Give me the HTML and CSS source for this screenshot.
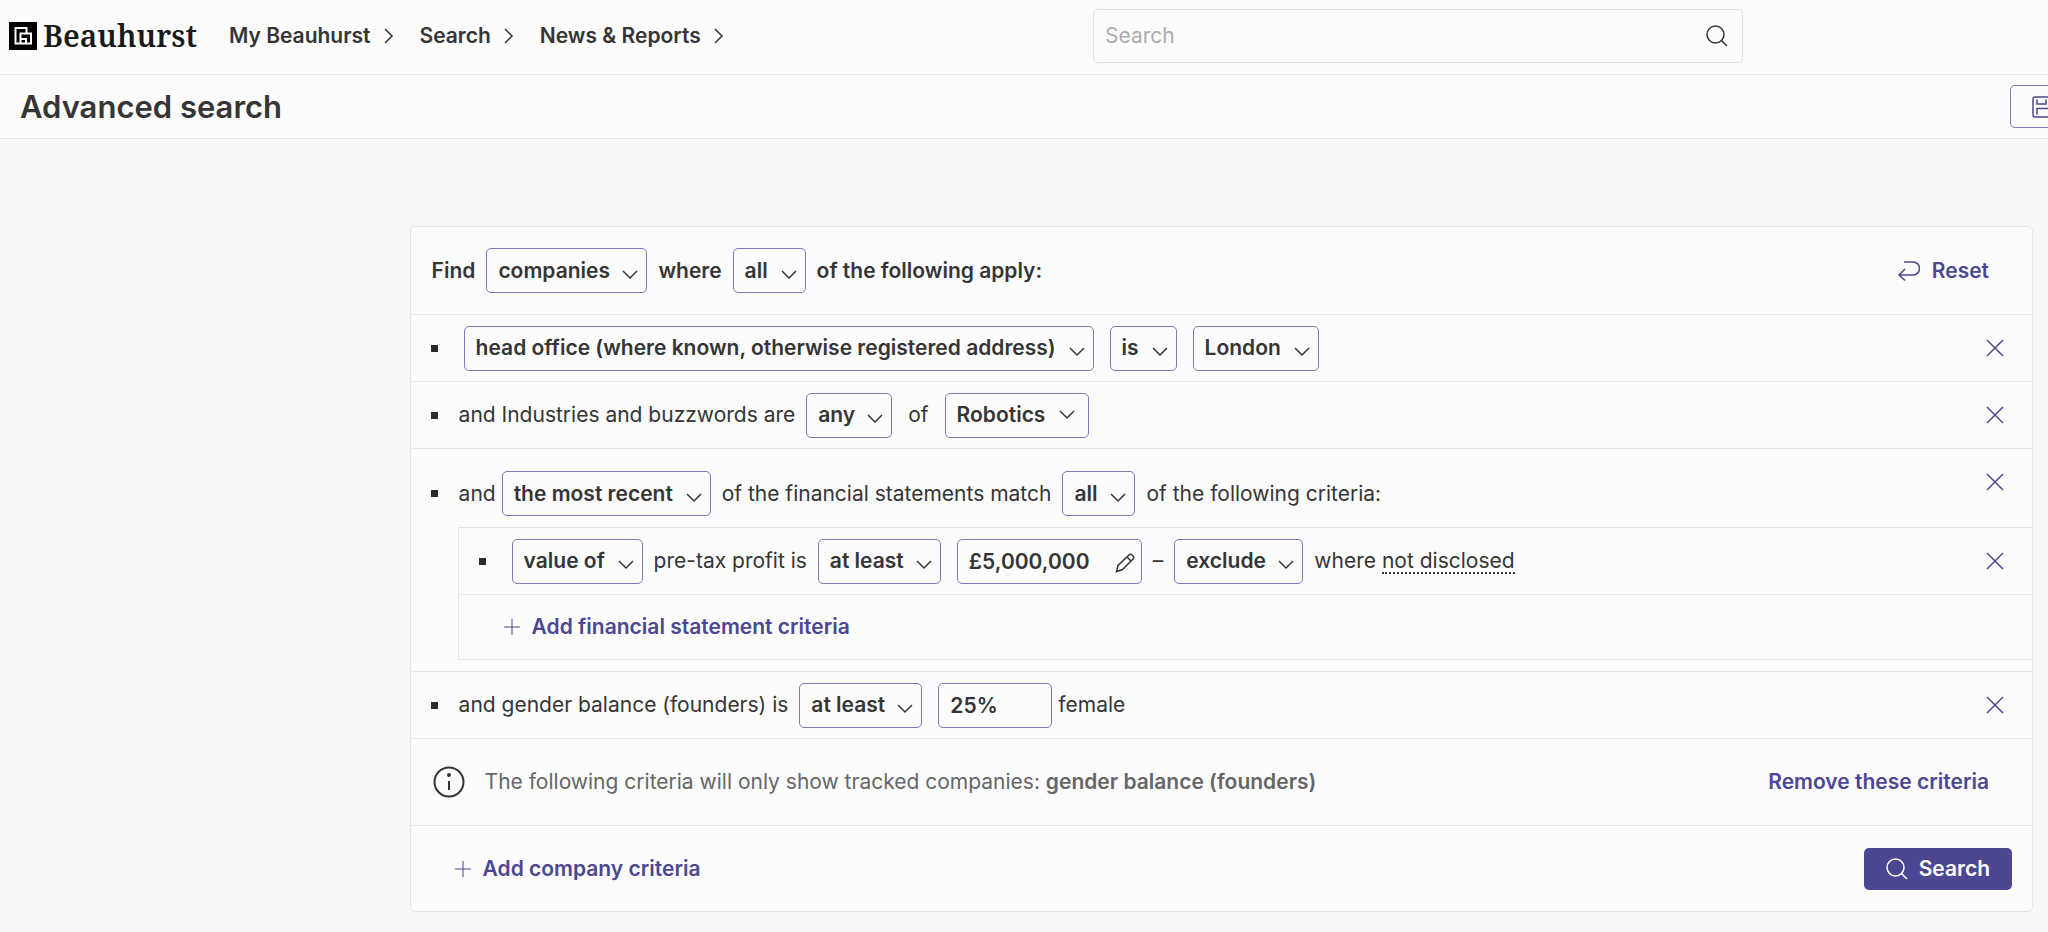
FILE: index.html
```html
<!DOCTYPE html>
<html lang="en">
<head>
<meta charset="utf-8">
<title>Advanced search</title>
<link rel="stylesheet" href="styles.css">
</head>
<body>
<svg class="sprite" aria-hidden="true">
  <symbol id="chevron" viewBox="0 0 16 10"><path d="M1 1l7 7 7-7"/></symbol>
  <symbol id="arrow" viewBox="0 0 10 18"><path d="M1 2l7 7-7 7"/></symbol>
  <symbol id="close" viewBox="0 0 18 18"><path d="M1 1l16 16M17 1L1 17"/></symbol>
  <symbol id="plus" viewBox="0 0 16 16"><path d="M8 0v16M0 8h16"/></symbol>
  <symbol id="glass" viewBox="0 0 22 22"><circle cx="9.5" cy="9.5" r="8.5"/><path d="M15.5 15.5l5.5 5.5"/></symbol>
</svg>

<header class="topbar">
  <a class="logo" href="#">
    <svg class="logo-mark" viewBox="0 0 28 28" aria-hidden="true">
      <rect width="28" height="28"/>
      <path d="M17.500 11.500V6H6.500V21.500H11.500V11.500H22V21.500H11.500M17 21.500V17H11.500"/>
    </svg>
    <span>Beauhurst</span>
  </a>
  <nav class="nav">
    <a href="#">My Beauhurst <svg class="arrow"><use href="#arrow"/></svg></a>
    <a href="#">Search <svg class="arrow"><use href="#arrow"/></svg></a>
    <a href="#">News &amp; Reports <svg class="arrow"><use href="#arrow"/></svg></a>
  </nav>
  <form class="site-search">
    <input type="search" placeholder="Search" aria-label="Search">
    <button type="button" aria-label="Go"><svg class="glass"><use href="#glass"/></svg></button>
  </form>
</header>

<div class="titlebar">
  <h1>Advanced search</h1>
  <button class="save" type="button" aria-label="Save">
    <svg viewBox="0 0 22 22"><path d="M1 3a2 2 0 0 1 2-2h13l5 5v13a2 2 0 0 1-2 2H3a2 2 0 0 1-2-2z"/><path d="M5 3.500v4.500h9V3.500M5 18.500v-6h12v6"/></svg>
  </button>
</div>

<main class="page">
  <form class="card">
    <div class="row row-find">
      <div class="line strong">
        <span>Find</span>
        <span class="picker"><select aria-label="Entity"><option>companies</option></select><svg><use href="#chevron"/></svg></span>
        <span>where</span>
        <span class="picker"><select aria-label="Match"><option>all</option></select><svg><use href="#chevron"/></svg></span>
        <span>of the following apply:</span>
      </div>
      <button class="link reset" type="button"><svg class="undo" viewBox="0 0 22 20"><path d="M6 1h9a6 6 0 0 1 0 13H1M7 8l-6 6 6 5.500"/></svg>Reset</button>
    </div>

    <ul class="criteria">
      <li class="row">
        <div class="line">
          <span class="picker"><select aria-label="Location type"><option>head office (where known, otherwise registered address)</option></select><svg><use href="#chevron"/></svg></span>
          <span class="picker"><select aria-label="Operator"><option>is</option></select><svg><use href="#chevron"/></svg></span>
          <span class="picker"><select aria-label="Location"><option>London</option></select><svg><use href="#chevron"/></svg></span>
        </div>
        <button class="remove" type="button" aria-label="Remove"><svg><use href="#close"/></svg></button>
      </li>
      <li class="row">
        <div class="line">
          <span>and Industries and buzzwords are</span>
          <span class="picker"><select aria-label="Industry match"><option>any</option></select><svg><use href="#chevron"/></svg></span>
          <span class="spaced">of</span>
          <button class="tag" type="button">Robotics <svg><use href="#chevron"/></svg></button>
        </div>
        <button class="remove" type="button" aria-label="Remove"><svg><use href="#close"/></svg></button>
      </li>
      <li class="group">
        <div class="row row-group">
          <div class="line">
            <span>and</span>
            <span class="picker tight"><select aria-label="Statement period"><option>the most recent</option></select><svg><use href="#chevron"/></svg></span>
            <span>of the financial statements match</span>
            <span class="picker"><select aria-label="Statement match"><option>all</option></select><svg><use href="#chevron"/></svg></span>
            <span>of the following criteria:</span>
          </div>
          <button class="remove" type="button" aria-label="Remove"><svg><use href="#close"/></svg></button>
        </div>
        <ul class="nested">
          <li class="row">
            <div class="line">
              <span class="picker"><select aria-label="Measure"><option>value of</option></select><svg><use href="#chevron"/></svg></span>
              <span>pre-tax profit is</span>
              <span class="picker"><select aria-label="Comparison"><option>at least</option></select><svg><use href="#chevron"/></svg></span>
              <span class="picker amount"><input type="text" value="£5,000,000" aria-label="Amount"><svg class="pencil" viewBox="0 0 20 20"><path d="M1.500 18.500l1.500-6L14 2q1.500-1.500 3 0l1 1q1.500 1.500 0 3L7.500 16.500zM12 4l4 4"/></svg></span>
              <span>–</span>
              <span class="picker"><select aria-label="Undisclosed handling"><option>exclude</option></select><svg><use href="#chevron"/></svg></span>
              <span>where <abbr>not disclosed</abbr></span>
            </div>
            <button class="remove" type="button" aria-label="Remove"><svg><use href="#close"/></svg></button>
          </li>
          <li class="add-row"><button class="link" type="button"><svg class="plus"><use href="#plus"/></svg>Add financial statement criteria</button></li>
        </ul>
      </li>
      <li class="row">
        <div class="line">
          <span>and gender balance (founders) is</span>
          <span class="picker"><select aria-label="Balance comparison"><option>at least</option></select><svg><use href="#chevron"/></svg></span>
          <span class="picker percent"><input type="text" value="25%" aria-label="Percentage"></span>
          <span>female</span>
        </div>
        <button class="remove" type="button" aria-label="Remove"><svg><use href="#close"/></svg></button>
      </li>
    </ul>

    <div class="row notice">
      <svg class="info" viewBox="0 0 32 32" aria-hidden="true"><circle cx="16" cy="16" r="14.500"/><path d="M16 15v9"/><circle class="dot" cx="16" cy="9" r="2"/></svg>
      <p>The following criteria will only show tracked companies: <b>gender balance (founders)</b></p>
      <button class="link" type="button">Remove these criteria</button>
    </div>

    <div class="row actions">
      <button class="link" type="button"><svg class="plus"><use href="#plus"/></svg>Add company criteria</button>
      <button class="primary" type="button"><svg class="glass"><use href="#glass"/></svg>Search</button>
    </div>
  </form>
</main>
</body>
</html>
```
FILE: styles.css
```css
:root {
  --ink: #353535;
  --line: #e5e5e7;
  --brand: #4b4792;
  --edge: #7d79b9;
  --surface: #fcfcfc;
}

* { box-sizing: border-box; }

body {
  margin: 0;
  min-height: 100vh;
  background: #f7f7f9;
  color: var(--ink);
  font: 400 21px/28px Inter, "Liberation Sans", sans-serif;
}

button, input, select { font: inherit; color: inherit; margin: 0; }
button { padding: 0; border: 0; background: none; cursor: pointer; }
svg { flex: none; fill: none; stroke: currentColor; stroke-width: 1.5; }
ul { margin: 0; padding: 0; list-style: none; }
.sprite { position: absolute; width: 0; height: 0; }

.topbar {
  display: flex;
  align-items: center;
  height: 75px;
  padding: 0 305px 2px 9px;
  border-bottom: 1px solid var(--line);
  background: var(--surface);
}
.logo {
  display: flex;
  align-items: center;
  gap: 6px;
  color: #1a1a1a;
  font: 600 30px/36px "Noto Serif", "Liberation Serif", serif;
  text-decoration: none;
}
.logo-mark { width: 28px; height: 28px; stroke: #fff; stroke-width: 2; }
.logo-mark rect { fill: #000; stroke: none; }
.nav { display: flex; gap: 26px; margin: 0 auto 0 32px; white-space: nowrap; }
.nav a {
  display: flex;
  align-items: center;
  gap: 13px;
  color: var(--ink);
  font-weight: 600;
  text-decoration: none;
}
.arrow { width: 10px; height: 18px; }
.site-search {
  display: flex;
  align-items: center;
  flex: 0 1 650px;
  height: 54px;
  padding: 0 14px 0 11px;
  border: 1px solid #e2e2e4;
  border-radius: 5px;
}
.site-search input {
  flex: 1;
  min-width: 0;
  padding: 0;
  border: 0;
  outline: 0;
  background: none;
}
.site-search input::placeholder { color: #adadad; opacity: 1; }
.glass { display: block; width: 22px; height: 22px; }

.titlebar {
  display: flex;
  align-items: center;
  justify-content: space-between;
  height: 64px;
  padding-left: 20px;
  overflow: hidden;
  border-bottom: 1px solid var(--line);
  background: var(--surface);
}
h1 { margin: 0; font-size: 31px; line-height: 40px; font-weight: 600; }
.save {
  flex: none;
  width: 110px;
  height: 43px;
  margin-right: -72px;
  padding-left: 21px;
  border: 1px solid var(--edge);
  border-radius: 5px;
  color: var(--brand);
  text-align: left;
}
.save svg { display: block; width: 22px; height: 22px; }

.page { padding: 87px 15px 20px 20%; }
.card {
  border: 1px solid var(--line);
  border-radius: 5px;
  background: var(--surface);
}

.row { display: flex; align-items: center; justify-content: space-between; }
.row-find { padding: 21px 43px 21px 21px; }
.line {
  position: relative;
  display: flex;
  align-items: center;
  gap: 6px;
  white-space: nowrap;
}
.strong { font-weight: 600; }
.spaced { margin: 0 5px; }

.picker { display: inline-grid; align-items: center; margin: 0 5px; }
.picker.tight { margin-left: 0; }
.picker > * { grid-area: 1 / 1; }
.picker select,
.picker input,
.tag {
  height: 45px;
  padding: 0 36px 0 11px;
  border: 1px solid var(--edge);
  border-radius: 5px;
  background: transparent;
  font-weight: 600;
  appearance: none;
}
.picker svg {
  justify-self: end;
  width: 16px;
  height: 10px;
  margin: 8px 9px 0 0;
  pointer-events: none;
}
.amount input { width: 185px; }
.amount .pencil { width: 20px; height: 20px; margin: 4px 7px 0 0; }
.percent { margin-right: 0; }
.percent input { width: 114px; padding-right: 11px; }
.tag {
  display: flex;
  align-items: center;
  gap: 14px;
  margin: 0 5px;
  padding-right: 13px;
}
.tag svg { width: 16px; height: 10px; }

.criteria .row {
  min-height: 67px;
  padding: 0 20px 0 48px;
  border-top: 1px solid var(--line);
}
.criteria .line::before {
  content: "";
  position: absolute;
  left: -28px;
  width: 7px;
  height: 7px;
  background: #2b2b2b;
}
.group { padding-bottom: 11px; }
.criteria .row-group { align-items: flex-start; padding-top: 22px; padding-bottom: 11px; }
.remove { padding: 8px; color: var(--brand); }
.remove svg { display: block; width: 18px; height: 18px; }
.row-group .remove { margin-top: -6px; }
.criteria .nested {
  margin-left: 47px;
  border: solid var(--line);
  border-width: 0 0 1px 1px;
}
.nested .add-row {
  display: flex;
  align-items: center;
  min-height: 65px;
  padding-left: 45px;
  border-top: 1px solid var(--line);
}
abbr { display: inline-block; border-bottom: 2px dotted var(--ink); line-height: 22px; }

.link {
  display: inline-flex;
  align-items: center;
  gap: 12px;
  color: var(--brand);
  font-weight: 600;
  white-space: nowrap;
}
.plus { width: 16px; height: 16px; stroke-width: 1; }
.undo { width: 22px; height: 20px; }

.notice {
  min-height: 87px;
  gap: 20px;
  padding: 0 43px 0 22px;
  border-top: 1px solid var(--line);
}
.notice p { flex: 1; margin: 0; color: #666; }
.notice b { font-weight: 600; }
.info { width: 32px; height: 32px; stroke-width: 2; }
.info .dot { fill: currentColor; stroke: none; }

.actions {
  min-height: 86px;
  padding: 0 20px 0 44px;
  border-top: 1px solid var(--line);
}
.primary {
  display: flex;
  align-items: center;
  gap: 11px;
  height: 42px;
  padding: 0 22px;
  border-radius: 5px;
  background: var(--brand);
  color: #fff;
  font-weight: 600;
}
```
